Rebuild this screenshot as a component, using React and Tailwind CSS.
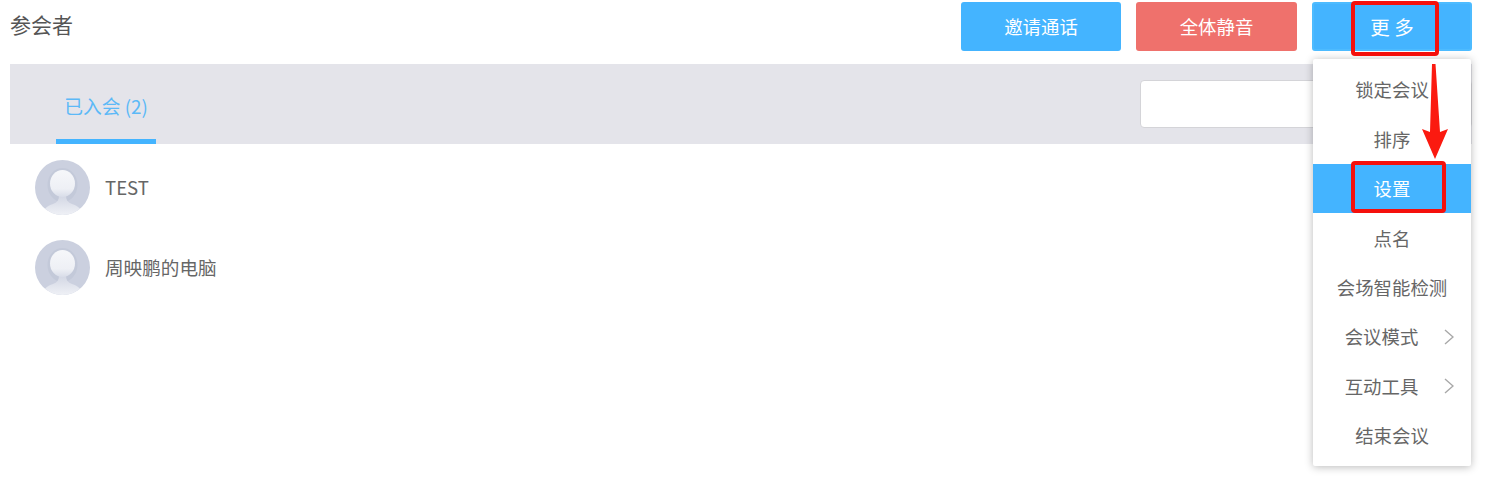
import React from "react";

const menuItems = [
  { label: "锁定会议" },
  { label: "排序" },
  { label: "设置", active: true },
  { label: "点名" },
  { label: "会场智能检测" },
  { label: "会议模式", sub: true },
  { label: "互动工具", sub: true },
  { label: "结束会议" },
];

const people = ["TEST", "周映鹏的电脑"];

function Avatar() {
  return (
    <svg width="55" height="55" viewBox="0 0 55 55" className="shrink-0">
      <defs>
        <linearGradient id="shoulder" x1="0" y1="0" x2="0" y2="1">
          <stop offset="0" stopColor="#d3d7e4" />
          <stop offset="1" stopColor="#eff1f6" />
        </linearGradient>
        <linearGradient id="head" x1="0" y1="0" x2="0" y2="1">
          <stop offset="0" stopColor="#f6f7fa" />
          <stop offset="0.7" stopColor="#eef0f5" />
          <stop offset="1" stopColor="#d8dce8" />
        </linearGradient>
        <clipPath id="round">
          <circle cx="27.5" cy="27.5" r="27.5" />
        </clipPath>
      </defs>
      <g clipPath="url(#round)">
        <rect width="55" height="55" fill="#cbd0df" />
        <ellipse cx="27.5" cy="25" rx="15" ry="17" fill="#c3c9d9" />
        <path d="M7 55c0-5 5-9 11-11 4-1.500 6-4 6-8h7c0 4 2 6.500 6 8 6 2 11 6 11 11z" fill="url(#shoulder)" />
        <ellipse cx="27.500" cy="23.500" rx="12.500" ry="13.500" fill="url(#head)" />
      </g>
    </svg>
  );
}

export default function App() {
  return (
    <div className="relative h-[490px] w-[1494px] overflow-hidden bg-white pl-[10px] pr-[22px] font-['Noto_Sans_CJK_SC','Liberation_Sans',sans-serif] text-[18.4px] text-[#666]">
      {/* Header */}
      <div className="flex h-[64px] items-start justify-between pt-[2px]">
        <div className="pt-[6px] text-[21px] leading-[32px] text-[#555]">参会者</div>
        <div className="flex gap-[15px]">
          <button className="h-[49px] w-[160px] rounded-[3px] bg-[#44b4ff] text-white">邀请通话</button>
          <button className="h-[49px] w-[161px] rounded-[3px] bg-[#ef716c] text-white">全体静音</button>
          <button className="h-[49px] w-[160px] rounded-[3px] border-2 border-[#4dbbff] bg-[#44b4ff] text-[19.5px] text-white">更 多</button>
        </div>
      </div>

      {/* Tabs bar */}
      <div className="flex h-[80px] items-start justify-between bg-[#e4e4ea]">
        <div className="ml-[46px] flex h-[80px] w-[100px] items-start justify-center border-b-[5px] border-[#44b4ff] pt-[27px] text-[18.8px] leading-[30px] whitespace-nowrap text-[#5cb9f7]">
          已入会 (2)
        </div>
        <div className="mt-[16px] h-[48px] w-[332px] rounded-[4px] border border-[#d4d4d8] bg-white" />
      </div>

      {/* Participants */}
      <div className="flex flex-col gap-[25px] pt-[16px] pl-[24.500px]">
        {people.map((name) => (
          <div key={name} className="flex h-[55px] items-center gap-[15.500px]">
            <Avatar />
            <span className="pb-[2px] text-[18.6px]">{name}</span>
          </div>
        ))}
      </div>

      {/* Dropdown */}
      <div className="absolute top-[59px] left-[1313px] w-[158px] rounded-[2px] bg-white py-[6px] shadow-[0_1px_8px_rgba(0,0,0,0.28)]">
        {menuItems.map((item) => (
          <div
            key={item.label}
            className={
              item.active
                ? "relative flex h-[49.4px] items-center justify-center bg-[#44b4ff] text-white"
                : "relative flex h-[49.4px] items-center justify-center pt-[1px]"
            }
          >
            <span className={item.sub ? "pr-[21px]" : ""}>{item.label}</span>
            {item.sub && (
              <svg width="10" height="16" viewBox="0 0 10 16" className="absolute top-[17px] right-[17px]" fill="none" stroke="#a8a8a8" strokeWidth="1.4">
                <path d="M1 1l8 7-8 7" />
              </svg>
            )}
          </div>
        ))}
      </div>

      {/* Red annotations */}
      <div className="absolute top-[1px] left-[1351px] h-[55px] w-[88px] rounded-[4px] border-[4px] border-[#f5100c]" />
      <div className="absolute top-[161px] left-[1351px] h-[52px] w-[95px] rounded-[4px] border-[4px] border-[#f5100c]" />
      <svg width="28" height="96" viewBox="0 0 28 96" className="absolute top-[63px] left-[1421px]">
        <path d="M11 1h3.500L19 69l8-3-13 30L1 66l8 3z" fill="#fb1a10" />
      </svg>
    </div>
  );
}
